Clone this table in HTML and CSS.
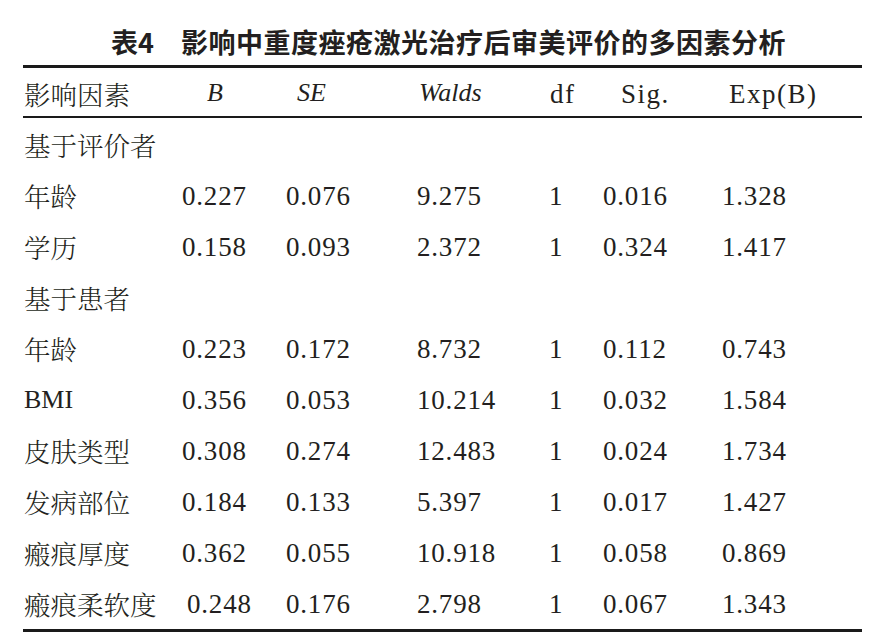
FILE: index.html
```html
<!DOCTYPE html>
<html lang="zh-CN">
<head>
<meta charset="utf-8">
<title>表4 影响中重度痤疮激光治疗后审美评价的多因素分析</title>
<link rel="stylesheet" href="styles.css">
</head>
<body>
<div class="caption"><span class="caption-no">表4</span><span class="caption-text">影响中重度痤疮激光治疗后审美评价的多因素分析</span></div>
<div class="table">
  <div class="row head">
    <div class="cell label">影响因素</div>
    <div class="cell h-b"><i>B</i></div>
    <div class="cell h-se"><i>SE</i></div>
    <div class="cell h-walds"><i>Walds</i></div>
    <div class="cell h-df lat">df</div>
    <div class="cell h-sig lat">Sig.</div>
    <div class="cell h-exp lat">Exp(B)</div>
  </div>
  <div class="body">
    <div class="row"><div class="cell label">基于评价者</div></div>
    <div class="row"><div class="cell label">年龄</div><div class="cell num">0.227</div><div class="cell num">0.076</div><div class="cell num">9.275</div><div class="cell num">1</div><div class="cell num">0.016</div><div class="cell num">1.328</div></div>
    <div class="row"><div class="cell label">学历</div><div class="cell num">0.158</div><div class="cell num">0.093</div><div class="cell num">2.372</div><div class="cell num">1</div><div class="cell num">0.324</div><div class="cell num">1.417</div></div>
    <div class="row"><div class="cell label">基于患者</div></div>
    <div class="row"><div class="cell label">年龄</div><div class="cell num">0.223</div><div class="cell num">0.172</div><div class="cell num">8.732</div><div class="cell num">1</div><div class="cell num">0.112</div><div class="cell num">0.743</div></div>
    <div class="row"><div class="cell label lat">BMI</div><div class="cell num">0.356</div><div class="cell num">0.053</div><div class="cell num">10.214</div><div class="cell num">1</div><div class="cell num">0.032</div><div class="cell num">1.584</div></div>
    <div class="row"><div class="cell label">皮肤类型</div><div class="cell num">0.308</div><div class="cell num">0.274</div><div class="cell num">12.483</div><div class="cell num">1</div><div class="cell num">0.024</div><div class="cell num">1.734</div></div>
    <div class="row"><div class="cell label">发病部位</div><div class="cell num">0.184</div><div class="cell num">0.133</div><div class="cell num">5.397</div><div class="cell num">1</div><div class="cell num">0.017</div><div class="cell num">1.427</div></div>
    <div class="row"><div class="cell label">瘢痕厚度</div><div class="cell num">0.362</div><div class="cell num">0.055</div><div class="cell num">10.918</div><div class="cell num">1</div><div class="cell num">0.058</div><div class="cell num">0.869</div></div>
    <div class="row"><div class="cell label">瘢痕柔软度</div><div class="cell num shift">0.248</div><div class="cell num">0.176</div><div class="cell num">2.798</div><div class="cell num">1</div><div class="cell num">0.067</div><div class="cell num">1.343</div></div>
  </div>
</div>
</body>
</html>
```
FILE: styles.css
```css
html, body {
  margin: 0;
  padding: 0;
  background: #ffffff;
}
body {
  width: 873px;
  height: 637px;
  overflow: hidden;
  color: #231f20;
  font-family: "Noto Serif CJK SC", "Noto Sans CJK SC", sans-serif;
}
.caption {
  display: flex;
  justify-content: center;
  gap: 27px;
  padding-top: 22px;
  padding-left: 24px;
  height: 40px;
  line-height: 40px;
  font-family: "Noto Sans CJK SC", sans-serif;
  font-weight: 700;
  font-size: 27px;
  letter-spacing: 0.5px;
  color: #231f20;
}
.caption-no {
  letter-spacing: 0;
}
.table {
  margin-top: 3px;
  margin-left: 23px;
  width: 839px;
  border-top: 3px solid #1a1a1a;
  border-bottom: 3px solid #1a1a1a;
}
.row {
  display: grid;
  grid-template-columns: 159px 104px 131px 132px 54px 119px 1fr;
  height: 51px;
  align-items: center;
}
.head {
  height: 44px;
  padding-top: 4px;
  border-bottom: 2px solid #1a1a1a;
}
.body {
  padding-top: 1px;
}
.cell {
  line-height: 30px;
  white-space: nowrap;
}
.label {
  padding-left: 1px;
  font-size: 26.5px;
  font-weight: 300;
}
.label.lat {
  font-family: "Liberation Serif", serif;
  font-size: 26px;
  font-weight: 400;
  letter-spacing: 0;
}
.num, .lat, .head i {
  font-family: "Liberation Serif", "Times New Roman", serif;
  font-size: 27px;
  font-weight: 400;
}
.num {
  letter-spacing: 0.8px;
}
.lat {
  letter-spacing: 1.5px;
}
.head i {
  font-style: italic;
  font-size: 26px;
}
.h-b { padding-left: 25px; }
.h-se { padding-left: 11px; }
.h-walds { padding-left: 2px; }
.h-df { padding-left: 1px; }
.h-sig { padding-left: 18px; }
.h-exp { padding-left: 7px; }
.shift { padding-left: 5px; }
```
